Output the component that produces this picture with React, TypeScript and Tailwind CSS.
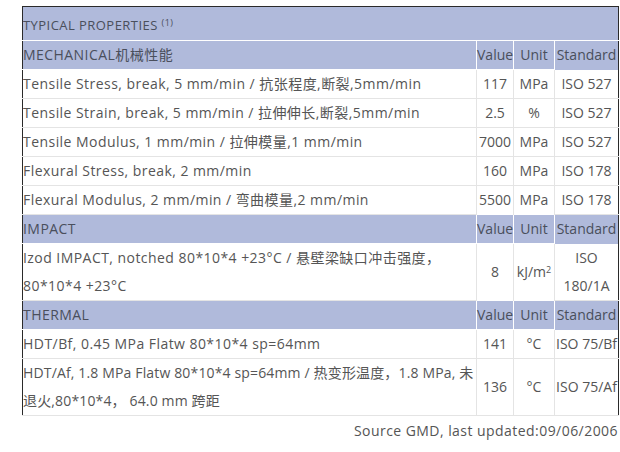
import React from 'react';

type Row = { name: React.ReactNode; value: string; unit: React.ReactNode; standard: React.ReactNode };

const sections: { title: string; rows: Row[] }[] = [
  {
    title: 'MECHANICAL机械性能',
    rows: [
      { name: 'Tensile Stress, break, 5 mm/min / 抗张程度,断裂,5mm/min', value: '117', unit: 'MPa', standard: 'ISO 527' },
      { name: 'Tensile Strain, break, 5 mm/min / 拉伸伸长,断裂,5mm/min', value: '2.5', unit: '%', standard: 'ISO 527' },
      { name: 'Tensile Modulus, 1 mm/min / 拉伸模量,1 mm/min', value: '7000', unit: 'MPa', standard: 'ISO 527' },
      { name: 'Flexural Stress, break, 2 mm/min', value: '160', unit: 'MPa', standard: 'ISO 178' },
      { name: 'Flexural Modulus, 2 mm/min / 弯曲模量,2 mm/min', value: '5500', unit: 'MPa', standard: 'ISO 178' },
    ],
  },
  {
    title: 'IMPACT',
    rows: [
      {
        name: 'Izod IMPACT, notched 80*10*4 +23°C / 悬壁梁缺口冲击强度， 80*10*4 +23°C',
        value: '8',
        unit: (
          <>
            kJ/m<sup className="text-[9px]">2</sup>
          </>
        ),
        standard: (
          <>
            ISO
            <br />
            180/1A
          </>
        ),
      },
    ],
  },
  {
    title: 'THERMAL',
    rows: [
      { name: 'HDT/Bf, 0.45 MPa Flatw 80*10*4 sp=64mm', value: '141', unit: '°C', standard: 'ISO 75/Bf' },
      {
        name: (
          <span className="whitespace-nowrap tracking-[0.15px]">
            HDT/Af, 1.8 MPa Flatw 80*10*4 sp=64mm / 热变形温度，1.8 MPa, 未
            <br />
            退火,80*10*4， 64.0 mm 跨距
          </span>
        ),
        value: '136',
        unit: '°C',
        standard: 'ISO 75/Af',
      },
    ],
  },
];

const App: React.FC = () => {
  return (
    <div
      className="w-[620px] h-[452px] bg-white pl-[22px] pt-[6px] text-[#555] text-[14px] tracking-[0.45px]"
      style={{ fontFamily: '"Open Sans", "Noto Sans CJK SC", sans-serif' }}
    >
      <table className="w-[596px] border-collapse border border-[#2a2a2a] table-fixed leading-[28px]">
        <colgroup>
          <col className="w-[454px]" />
          <col className="w-[37px]" />
          <col className="w-[41px]" />
          <col className="w-[64px]" />
        </colgroup>
        <tbody>
          <tr className="bg-[#b0badb] border-b border-white">
            <td colSpan={4} className="h-[34px] pt-[3px] text-[13px] text-[#4a4f5c]">
              TYPICAL PROPERTIES <sup className="text-[9px]">(1)</sup>
            </td>
          </tr>
          {sections.map((s) => (
            <React.Fragment key={s.title}>
              <tr className="bg-[#b0badb] text-[#4a4f5c]">
                <td className="border-b border-white">{s.title}</td>
                <td className="border border-white text-center tracking-normal">Value</td>
                <td className="border border-white text-center tracking-normal">Unit</td>
                <td className="border-l border-white text-center tracking-normal">Standard</td>
              </tr>
              {s.rows.map((r, i) => (
                <tr key={i} className="border-b border-[#e4e4e4]">
                  <td className="align-middle">{r.name}</td>
                  <td className="border-l border-[#e4e4e4] text-center tracking-normal">{r.value}</td>
                  <td className="border-l border-[#e4e4e4] text-center whitespace-nowrap tracking-normal">{r.unit}</td>
                  <td className="border-l border-[#e4e4e4] text-center whitespace-nowrap tracking-normal">{r.standard}</td>
                </tr>
              ))}
            </React.Fragment>
          ))}
        </tbody>
      </table>
      <div className="w-[596px] text-right mt-[5px] leading-[20px]">Source GMD, last updated:09/06/2006</div>
    </div>
  );
};

export default App;
